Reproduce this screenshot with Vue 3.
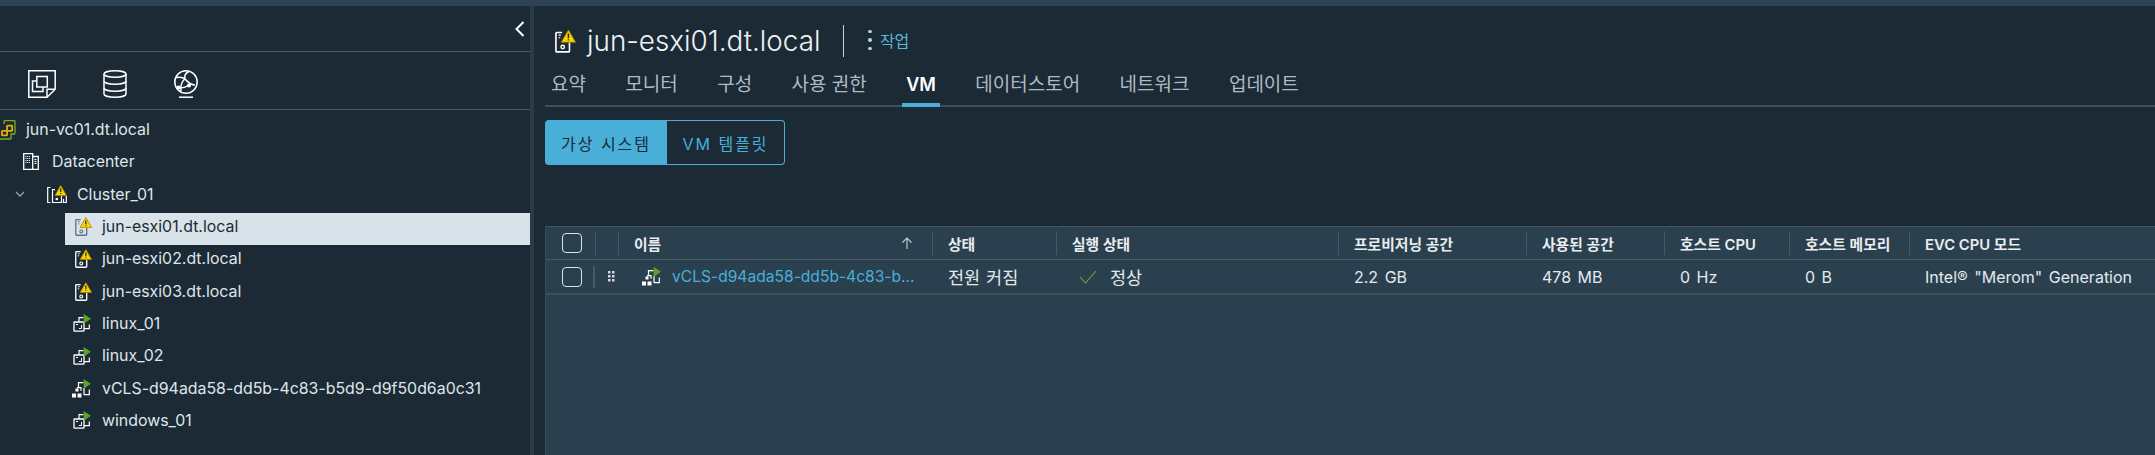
<script setup>
const tree = [
  { label: 'jun-vc01.dt.local', icon: 'vcenter', indent: 0, w: 16, h: 20, gap: 10 },
  { label: 'Datacenter', icon: 'datacenter', indent: 23, w: 16, h: 17, gap: 13 },
  { label: 'Cluster_01', icon: 'cluster', indent: 47, w: 20, h: 18, gap: 10, open: true },
  { label: 'jun-esxi01.dt.local', icon: 'host', indent: 75, w: 17, h: 19, gap: 10, selected: true },
  { label: 'jun-esxi02.dt.local', icon: 'host', indent: 75, w: 17, h: 19, gap: 10 },
  { label: 'jun-esxi03.dt.local', icon: 'host', indent: 75, w: 17, h: 19, gap: 10 },
  { label: 'linux_01', icon: 'vm', indent: 73, w: 18, h: 18, gap: 11 },
  { label: 'linux_02', icon: 'vm', indent: 73, w: 18, h: 18, gap: 11 },
  { label: 'vCLS-d94ada58-dd5b-4c83-b5d9-d9f50d6a0c31', icon: 'vcls', indent: 72, w: 19, h: 19, gap: 11 },
  { label: 'windows_01', icon: 'vm', indent: 73, w: 18, h: 18, gap: 11 },
]

const tabs = ['요약', '모니터', '구성', '사용 권한', 'VM', '데이터스토어', '네트워크', '업데이트']

const headers = ['상태', '실행 상태', '프로비저닝 공간', '사용된 공간', '호스트 CPU', '호스트 메모리', 'EVC CPU 모드']
</script>

<template>
  <div class="page">
    <svg class="defs" width="0" height="0" aria-hidden="true">
      <symbol id="host" viewBox="0 0 18 20">
        <path d="M6 2.700H1.600a.8.8 0 0 0-.8.8v15a.8.8 0 0 0 .8.8h10a.8.8 0 0 0 .8-.8V11" fill="none" stroke="currentColor" stroke-width="1.400" />
        <path d="M3 5h2M3 7.200h1.500" stroke="currentColor" stroke-width="1" />
        <circle cx="6.600" cy="15.200" r="1.500" fill="none" stroke="currentColor" stroke-width="1.200" />
        <path d="M11.500.6 17.600 11H5.400Z" fill="#fbd400" stroke="#a58400" stroke-width=".8" stroke-linejoin="round" />
        <path d="M11.500 3.600v4M11.500 8.600v1" stroke="#2b2b16" stroke-width="1.300" />
      </symbol>
      <symbol id="vm" viewBox="0 0 18 18">
        <path d="M6 8V3.700h4.500M16.300 10.500v4.200H11" fill="none" stroke="currentColor" stroke-width="1.200" />
        <rect x="1" y="8" width="10" height="9.200" rx=".6" fill="none" stroke="currentColor" stroke-width="1.300" />
        <path d="M3 10.500h2M8.500 11v3.500H6" fill="none" stroke="currentColor" stroke-width="1" />
        <path d="M10.700 0 18 4.800l-7.300 5Z" fill="#5aa426" />
      </symbol>
      <symbol id="vcls" viewBox="0 0 19 19">
        <path d="M6.500 8V3.700h5M17.300 10.500v5.200H12M12 9v6.700M5 8.700h4v3" fill="none" stroke="currentColor" stroke-width="1.200" />
        <path d="M3.500 9.500h3v3h-3ZM0 14.500h4v4H0ZM5.500 14.500h4v4h-4Z" fill="currentColor" />
        <path d="M11.700 0 19 4.800l-7.300 5Z" fill="#5aa426" />
      </symbol>
      <symbol id="vcenter" viewBox="4 0 16 20">
        <path d="M8 4V1.500a.8.8 0 0 1 .8-.8h9.400a.8.8 0 0 1 .8.8v11.700a.8.8 0 0 1-.8.8H15v4.200a.8.8 0 0 1-.8.8H0" fill="none" stroke="#77ad1f" stroke-width="1.300" />
        <path d="M11 10V6.200a.6.6 0 0 1 .6-.6h4a.6.6 0 0 1 .6.6v4a.6.6 0 0 1-.6.6H6.500a.6.6 0 0 0-.6.6v3.400a.6.6 0 0 0 .6.6h4a.6.6 0 0 0 .6-.6V10" fill="none" stroke="#e4ae0c" stroke-width="1.800" />
      </symbol>
      <symbol id="datacenter" viewBox="0 0 16 17">
        <path d="M.7.7h9v15.600h-9ZM9.700 3.500h5.600v12.800H9.700" fill="none" stroke="currentColor" stroke-width="1.300" />
        <path d="M2.500 3.500h5M2.500 5.500h5M2.500 7.500h5M2.500 9.500h5" stroke="currentColor" stroke-width="1" stroke-dasharray="1 .7" />
        <path d="M11.500 6.500h2M11.500 8.500h2M11.500 10.500h2" stroke="currentColor" stroke-width="1" />
      </symbol>
      <symbol id="cluster" viewBox="0 0 20 18">
        <path d="M3.500 2.500H.7v15h2.800M16.500 14v3.500h2.800V11" fill="none" stroke="currentColor" stroke-width="1.200" />
        <path d="M8 4.700H5.500v12.800h9V11" fill="none" stroke="currentColor" stroke-width="1.200" />
        <circle cx="9.800" cy="14" r="1.300" fill="currentColor" />
        <path d="M13.700.5 19.500 10.500H8Z" fill="#fbd400" stroke="#a58400" stroke-width=".8" stroke-linejoin="round" />
        <path d="M13.700 3.300v3.800M13.700 8v1" stroke="#2b2b16" stroke-width="1.300" />
      </symbol>
    </svg>

    <div class="topbar"></div>

    <div class="content">
      <aside class="sidebar">
        <div class="collapse-row">
          <svg width="12" height="18" viewBox="0 0 12 18" fill="none" stroke="#fff" stroke-width="2"><path d="M9.500 2 2.500 9l7 7" /></svg>
        </div>

        <div class="nav-icons">
          <svg width="28" height="28" viewBox="0 0 28 28" fill="none" stroke="#fff" stroke-width="1.500">
            <path d="M.8.8h26.400v18.500L19 27.200H.8Z" />
            <path d="M27 19.300h-8v7.800" />
            <path d="M8 11h-3.500v10.500H15V17" />
            <path d="M8.800 6.500h10.500v10.500H8.800Z" />
          </svg>
          <svg width="24" height="28" viewBox="0 0 24 28" fill="none" stroke="#fff" stroke-width="1.500">
            <ellipse cx="12" cy="4" rx="11" ry="3.200" />
            <path d="M1 4v20c0 1.800 4.900 3.200 11 3.200s11-1.400 11-3.200V4" />
            <path d="M1 11c0 1.800 4.900 3.200 11 3.200s11-1.400 11-3.200M1 18c0 1.800 4.900 3.200 11 3.200s11-1.400 11-3.200" />
          </svg>
          <svg width="24" height="28" viewBox="0 0 24 28" fill="none" stroke="#fff" stroke-width="1.500">
            <circle cx="12" cy="12" r="11.200" />
            <path d="M2 7.500c4-.5 7-.5 9 1.500s5 6 10 6M15 1.500c-3 1.500-5 4-4 7M11 8.500c-3 3-5 7-4 13M3.500 18c3 .3 8-.5 11-2.500" />
            <path d="M5 27.200h14" />
            <circle cx="15" cy="15.500" r="1.300" fill="#fff" />
            <circle cx="4.500" cy="17.500" r="1.300" fill="#fff" />
          </svg>
        </div>

        <ul class="tree">
          <li
            v-for="node in tree"
            :key="node.label"
            class="node"
            :class="{ selected: node.selected }"
            :style="{ marginLeft: node.selected ? '65px' : 0, paddingLeft: (node.selected ? node.indent - 65 : node.indent) + 'px' }"
          >
            <svg v-if="node.open" class="chevron" width="10" height="6" viewBox="0 0 10 6" fill="none" stroke="#8fa8bd" stroke-width="1.300"><path d="M1 1l4 4 4-4" /></svg>
            <svg class="node-icon" :width="node.w" :height="node.h" :style="{ marginRight: node.gap + 'px' }"><use :href="'#' + node.icon" /></svg>
            <span>{{ node.label }}</span>
          </li>
        </ul>
      </aside>

      <main class="main">
        <header class="title-row">
          <svg class="title-icon" width="21" height="24"><use href="#host" /></svg>
          <h1>jun-esxi01.dt.local</h1>
          <span class="title-divider"></span>
          <button class="actions">
            <span class="kebab"><i></i><i></i><i></i></span>
            작업
          </button>
        </header>

        <nav class="tabs">
          <a v-for="tab in tabs" :key="tab" class="tab" :class="{ active: tab === 'VM' }">{{ tab }}</a>
        </nav>

        <div class="btn-group">
          <button class="seg on">가상 시스템</button>
          <button class="seg">VM 템플릿</button>
        </div>

        <section class="grid">
          <div class="grid-row head">
            <div class="cell-check"><span class="checkbox"></span></div>
            <div class="head-cell"></div>
            <div class="head-cell name-head">
              <span>이름</span>
              <svg width="14" height="14" viewBox="0 0 14 14" fill="none" stroke="#c6d0d6" stroke-width="1.100"><path d="M7 13V2M2.500 6.500 7 2l4.500 4.500" /></svg>
            </div>
            <div v-for="h in headers" :key="h" class="head-cell">{{ h }}</div>
          </div>

          <div class="grid-row body">
            <div class="cell-check"><span class="checkbox"></span></div>
            <div class="grip-cell">
              <svg width="7" height="11" viewBox="0 0 7 11" fill="#d3dade"><path d="M0 0h2.500v2.500H0ZM4 0h2.500v2.500H4ZM0 4h2.500v2.500H0ZM4 4h2.500v2.500H4ZM0 8h2.500v2.500H0ZM4 8h2.500v2.500H4Z" /></svg>
            </div>
            <div class="cell name-cell">
              <svg class="row-icon" width="19" height="19"><use href="#vcls" /></svg>
              <a>vCLS-d94ada58-dd5b-4c83-b...</a>
            </div>
            <div class="cell ko">전원 커짐</div>
            <div class="cell run-cell">
              <svg width="18" height="14" viewBox="0 0 18 14" fill="none" stroke="#60b515" stroke-width="1.100"><path d="M1 7l5.500 6L17 1" /></svg>
              <span class="ko">정상</span>
            </div>
            <div class="cell">2.2 GB</div>
            <div class="cell">478 MB</div>
            <div class="cell">0 Hz</div>
            <div class="cell">0 B</div>
            <div class="cell">Intel® "Merom" Generation</div>
          </div>
        </section>
      </main>
    </div>
  </div>
</template>

<style>
html,
body {
  margin: 0;
  background: #1b2a35;
}
</style>

<style scoped>
.page {
  width: 2155px;
  height: 455px;
  overflow: hidden;
  display: flex;
  flex-direction: column;
  background: #1b2a35;
  color: #e3e9ed;
  font-family: Inter, "Noto Sans CJK KR", sans-serif;
}

.defs {
  position: absolute;
}

.topbar {
  height: 6px;
  background: #2f4254;
  flex: none;
}

.content {
  flex: 1;
  display: flex;
  min-height: 0;
}

.sidebar {
  width: 530px;
  flex: none;
  border-right: 4px solid #293a48;
  overflow: hidden;
}

.collapse-row {
  height: 46px;
  box-sizing: border-box;
  display: flex;
  align-items: center;
  justify-content: flex-end;
  padding: 0 4px 0 0;
  border-bottom: 1px solid #485764;
}

.nav-icons {
  height: 58px;
  box-sizing: border-box;
  display: flex;
  align-items: center;
  gap: 47px;
  padding: 7px 0 0 28px;
  border-bottom: 1px solid #485764;
}

.tree {
  list-style: none;
  margin: 0;
  padding: 6px 0 0;
}

.node {
  height: 32.3px;
  box-sizing: border-box;
  padding-bottom: 5px;
  display: flex;
  align-items: center;
  font-size: 15.900px;
  white-space: nowrap;
  color: #dfe6ea;
}

.node.selected {
  background: #d8e3e9;
  color: #1b2a35;
}

.node.selected .node-icon {
  color: #66757f;
}

.node-icon {
  flex: none;
  color: #fff;
}

.chevron {
  position: absolute;
  left: 15px;
}

.main {
  flex: 1;
  min-width: 0;
  padding-left: 11px;
}

.title-row {
  height: 51px;
  box-sizing: border-box;
  padding: 19px 0 0 10px;
  display: flex;
  align-items: center;
}

.title-icon {
  color: #fff;
  margin-right: 11px;
}

h1 {
  margin: 0;
  font-size: 27.800px;
  font-weight: 300;
  color: #eef2f4;
}

.title-divider {
  width: 1px;
  height: 32px;
  background: #c5ced4;
  margin: 0 24px 0 23px;
}

.actions {
  background: none;
  border: 0;
  padding: 0 0 2px;
  display: flex;
  align-items: center;
  gap: 8px;
  font: inherit;
  font-size: 16px;
  color: #57b9d8;
}

.kebab {
  display: flex;
  flex-direction: column;
  gap: 5px;
}

.kebab i {
  width: 3.500px;
  height: 3.500px;
  border-radius: 50%;
  background: #a8d2e2;
}

.tabs {
  height: 50px;
  box-sizing: border-box;
  display: flex;
  gap: 39.400px;
  padding-left: 6px;
  border-bottom: 2px solid #3f505d;
}

.tab {
  height: 50px;
  box-sizing: border-box;
  padding: 16px 0 0;
  font-size: 19px;
  line-height: 24px;
  color: #adbbc4;
  white-space: nowrap;
}

.tab.active {
  margin: 0 -4px;
  padding: 16px 4px 0;
  border-bottom: 4px solid #49afd9;
  font-size: 18px;
  color: #fff;
  font-weight: 600;
}

.btn-group {
  display: flex;
  width: 240px;
  height: 45px;
  margin-top: 13px;
  box-sizing: border-box;
}

.seg {
  height: 45px;
  box-sizing: border-box;
  font: inherit;
  font-size: 16px;
  font-weight: 400;
  letter-spacing: 2px;
  background: none;
  border: 1px solid #49afd9;
  border-left: 0;
  border-radius: 0 4px 4px 0;
  color: #49afd9;
  flex: 1;
  padding: 0;
}

.seg.on {
  flex: none;
  width: 122px;
  background: #49afd9;
  color: #1b2a35;
  border: 0;
  border-radius: 4px 0 0 4px;
}

.grid {
  margin-top: 61px;
  height: 230px;
  background: #2b404f;
  border-top: 1px solid #465763;
  border-left: 1px solid #3a4b58;
}

.grid-row {
  display: grid;
  grid-template-columns: 49px 23px 314px 124px 282px 188px 138px 125px 120px 1fr;
  align-items: center;
}

.head {
  height: 32px;
  border-bottom: 1px solid #485a67;
}

.body {
  height: 35px;
  border-bottom: 2px solid #3d4f5c;
  box-sizing: border-box;
}

.cell-check {
  padding-left: 16px;
  display: flex;
}

.checkbox {
  width: 20px;
  height: 20px;
  box-sizing: border-box;
  border: 1.500px solid #dde3e7;
  border-radius: 4px;
}

.head-cell {
  height: 24px;
  box-sizing: border-box;
  border-left: 1.500px solid #475966;
  padding-left: 15px;
  display: flex;
  align-items: center;
  font-size: 14.800px;
  font-weight: 600;
  color: #e9edf0;
  white-space: nowrap;
}

.name-head {
  justify-content: space-between;
  padding-right: 18px;
}

.grip-cell {
  height: 22px;
  margin-left: -2px;
  border-left: 2px solid #475966;
  padding-left: 13px;
  display: flex;
  align-items: center;
}

.cell {
  padding-left: 16px;
  font-size: 16px;
  word-spacing: 2px;
  color: #e3e9ed;
  white-space: nowrap;
  display: flex;
  align-items: center;
}

.ko {
  font-size: 17.500px;
  word-spacing: 1px;
}

.name-cell {
  padding-left: 24px;
  font-size: 15.600px;
}

.row-icon {
  flex: none;
  margin-right: 11px;
  color: #fff;
}

.name-cell a {
  color: #49afd9;
}

.run-cell {
  padding-left: 23px;
  gap: 13px;
}
</style>
